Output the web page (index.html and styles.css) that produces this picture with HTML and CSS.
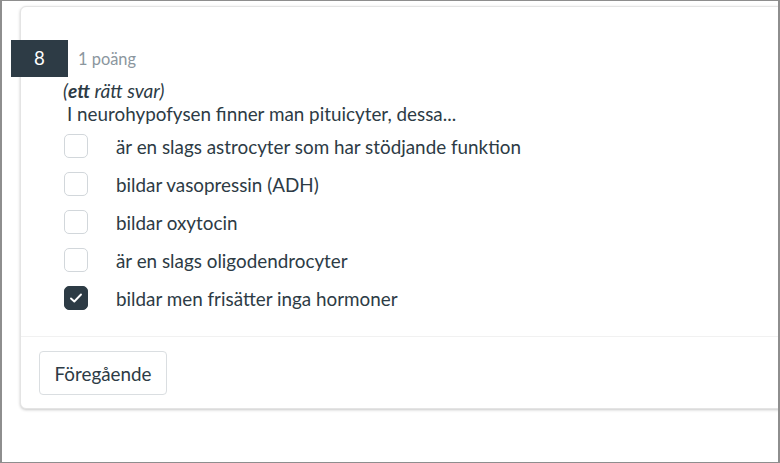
FILE: index.html
```html
<!DOCTYPE html>
<html lang="sv">
<head>
<meta charset="utf-8">
<title>Fråga 8</title>
<link rel="stylesheet" href="styles.css">
</head>
<body>
<div class="frame">
  <div class="card">
    <div class="question">
      <div class="q-header">
        <div class="q-number">8</div>
        <div class="q-points">1 poäng</div>
      </div>
      <div class="q-body">
        <div class="q-hint">(<b>ett</b> rätt svar)</div>
        <div class="q-text">I neurohypofysen finner man pituicyter, dessa...</div>
        <ul class="options">
          <li class="option"><span class="box"></span><span class="label">är en slags astrocyter som har stödjande funktion</span></li>
          <li class="option"><span class="box"></span><span class="label">bildar vasopressin (ADH)</span></li>
          <li class="option"><span class="box"></span><span class="label">bildar oxytocin</span></li>
          <li class="option"><span class="box"></span><span class="label">är en slags oligodendrocyter</span></li>
          <li class="option"><span class="box checked"><svg width="16" height="16" viewBox="0 0 16 16"><polyline points="3,8.5 6.3,11.5 13,4.5" fill="none" stroke="#fff" stroke-width="1.9" stroke-linecap="round" stroke-linejoin="round"/></svg></span><span class="label">bildar men frisätter inga hormoner</span></li>
        </ul>
      </div>
    </div>
    <div class="nav">
      <button class="btn">Föregående</button>
    </div>
  </div>
</div>
</body>
</html>
```
FILE: styles.css
```css
html, body {
  margin: 0;
  padding: 0;
  background: #fff;
}
body {
  font-family: Lato, "Open Sans", "Liberation Sans", sans-serif;
  color: #2d3b45;
  font-size: 18.85px;
  line-height: 23px;
}
.frame {
  width: 780px;
  height: 463px;
  box-sizing: border-box;
  border-style: solid;
  border-color: #8e8e8e;
  border-width: 1px 2px 1px 2px;
  overflow: hidden;
  background: #fff;
}
.card {
  margin: 5px -40px 0 18px;
  border: 1px solid #e4e4e4;
  border-radius: 6px;
  box-shadow: 0 1px 3px rgba(0, 0, 0, 0.22);
  background: #fff;
}
.question {
  padding-top: 33px;
}
.q-header {
  display: flex;
  align-items: center;
  margin-left: -10px;
}
.q-number {
  width: 57px;
  height: 37px;
  background: #2d3b45;
  color: #fff;
  display: flex;
  align-items: center;
  justify-content: center;
  font-size: 18.7px;
}
.q-points {
  margin-left: 10px;
  color: #8b969e;
  font-size: 16.4px;
}
.q-body {
  padding-left: 42px;
}
.q-hint {
  margin-top: 2px;
  font-style: italic;
  font-size: 19.1px;
}
.q-hint b {
  font-weight: 700;
}
.q-text {
  margin-left: 4px;
}
.options {
  list-style: none;
  margin: 2px 0 0 0;
  padding: 0 0 19px 1px;
}
.option {
  display: flex;
  align-items: center;
  height: 38px;
}
.box {
  width: 24px;
  height: 24px;
  box-sizing: border-box;
  border: 1px solid #d2d7db;
  border-radius: 5px;
  background: #fff;
  display: flex;
  align-items: center;
  justify-content: center;
}
.box.checked {
  background: #2d3b45;
  border-color: #2d3b45;
}
.label {
  margin-left: 28px;
  padding-top: 1px;
}
.nav {
  border-top: 1px solid #f1f1f1;
  padding: 14px 0 13px 18px;
}
.btn {
  font-family: Lato, "Open Sans", "Liberation Sans", sans-serif;
  font-size: 18.85px;
  color: #2d3b45;
  background: #fff;
  border: 1px solid #dadee1;
  border-radius: 4px;
  width: 128px;
  height: 44px;
  padding: 0;
  cursor: pointer;
}
```
